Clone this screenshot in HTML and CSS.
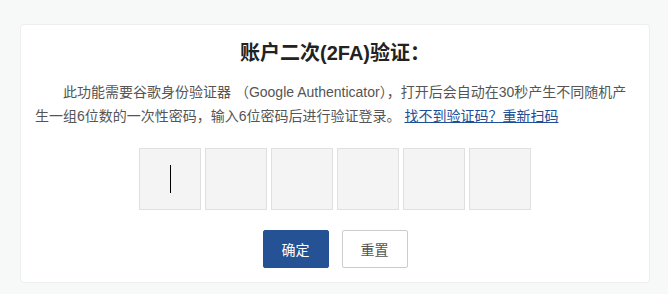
FILE: index.html
```html
<!DOCTYPE html>
<html lang="zh-CN">
<head>
<meta charset="utf-8">
<title>账户二次(2FA)验证</title>
<link rel="stylesheet" href="styles.css">
</head>
<body>
<div class="card">
  <h2 class="title">账户二次(2FA)验证：</h2>
  <p class="desc">此功能需要谷歌身份验证器 （Google Authenticator），打开后会自动在30秒产生不同随机产生一组6位数的一次性密码，输入6位密码后进行验证登录。 <a class="link" href="#">找不到验证码？重新扫码</a></p>
  <div class="codes">
    <div class="code focus"><span class="caret"></span></div>
    <div class="code"></div>
    <div class="code"></div>
    <div class="code"></div>
    <div class="code"></div>
    <div class="code"></div>
  </div>
  <div class="actions">
    <button class="btn primary" type="button">确定</button>
    <button class="btn" type="button">重置</button>
  </div>
</div>
</body>
</html>
```
FILE: styles.css
```css
html, body {
  margin: 0;
  padding: 0;
}
body {
  background: #f7f8f8;
  font-family: "Liberation Sans", "Noto Sans CJK SC", sans-serif;
  color: #555;
}
.card {
  box-sizing: border-box;
  margin: 24px 0 0 20px;
  width: 630px;
  height: 259px;
  background: #fff;
  border: 1px solid #eeeeee;
  border-radius: 4px;
  padding: 14px 14px 0 14px;
}
.title {
  margin: 0;
  text-align: center;
  font-size: 20px;
  line-height: 28px;
  font-weight: bold;
  color: #222;
}
.desc {
  margin: 13px 0 0 0;
  font-size: 14px;
  line-height: 24px;
  text-indent: 2em;
  color: #555;
}
.link {
  color: #1e4f96;
  text-decoration: underline;
}
.codes {
  margin-top: 20px;
  display: flex;
  justify-content: center;
  gap: 4px;
}
.code {
  box-sizing: border-box;
  width: 62px;
  height: 62px;
  background: #f4f4f4;
  border: 1px solid #e0e0e0;
  display: flex;
  align-items: center;
  justify-content: center;
}
.caret {
  display: block;
  width: 1px;
  height: 28px;
  background: #000;
}
.actions {
  margin-top: 20px;
  display: flex;
  justify-content: center;
  gap: 13px;
}
.btn {
  box-sizing: border-box;
  width: 66px;
  height: 38px;
  border: 1px solid #cccccc;
  border-radius: 2px;
  background: #fff;
  color: #555;
  font-family: "Liberation Sans", "Noto Sans CJK SC", sans-serif;
  font-size: 14px;
  padding: 0;
  cursor: pointer;
}
.btn.primary {
  background: #245294;
  border-color: #245294;
  color: #fff;
}
```
